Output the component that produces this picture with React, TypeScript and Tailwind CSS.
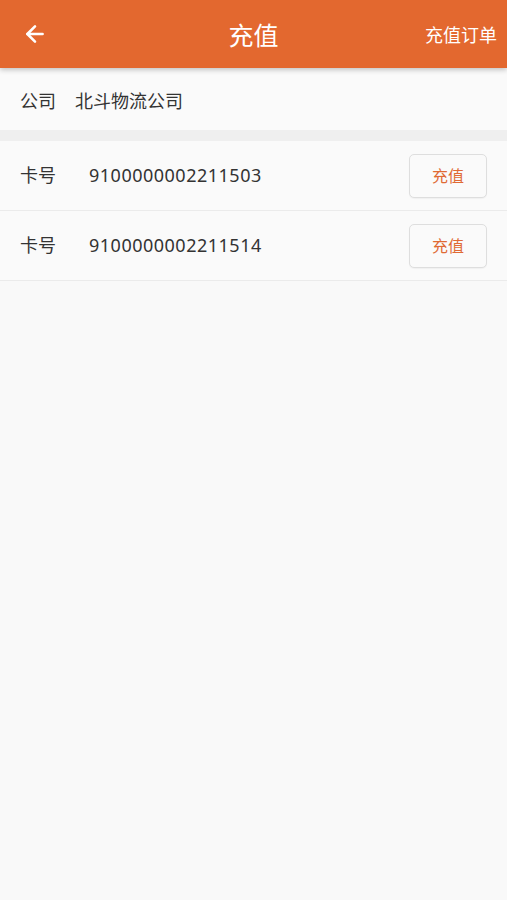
import { ArrowLeft } from 'lucide-react'

const cards = ['9100000002211503', '9100000002211514']

export default function App() {
  return (
    <div
      className="min-h-[900px] bg-[#f9f9f9] text-[#333]"
      style={{ fontFamily: '"Noto Sans", "Noto Sans CJK SC", sans-serif' }}
    >
      <header className="relative z-10 h-[68px] bg-[#e3682f] text-white flex items-center shadow-[0_2px_5px_rgba(0,0,0,0.22)]">
        <div className="w-[70px] pl-[22px] flex items-center">
          <ArrowLeft size={26} strokeWidth={2.4} />
        </div>
        <h1 className="flex-1 text-center text-[25px] leading-none pl-[20px] pt-[2px]">充值</h1>
        <div className="w-[90px] pr-[10px] text-right text-[18px] leading-none pt-[2px]">充值订单</div>
      </header>

      <div className="h-[62px] bg-[#fafafa] flex items-center px-[20px] pt-[4px] text-[18px]">
        <span className="w-[55px]">公司</span>
        <span>北斗物流公司</span>
      </div>
      <div className="h-[11px] bg-[#efefef]" />

      <div>
        {cards.map(no => (
          <div key={no} className="h-[70px] flex items-center pl-[20px] pr-[20px] border-b border-[#ebebeb] bg-[#fafafa]">
            <span className="w-[69px] text-[18px]">卡号</span>
            <span className="flex-1 text-[18px] tracking-[0.5px]">{no}</span>
            <button className="w-[78px] h-[44px] rounded-[5px] border border-[#dedede] bg-[#fafafa] text-[#e06a35] text-[16px] shadow-[0_1px_1px_rgba(0,0,0,0.04)]">
              充值
            </button>
          </div>
        ))}
      </div>
    </div>
  )
}
